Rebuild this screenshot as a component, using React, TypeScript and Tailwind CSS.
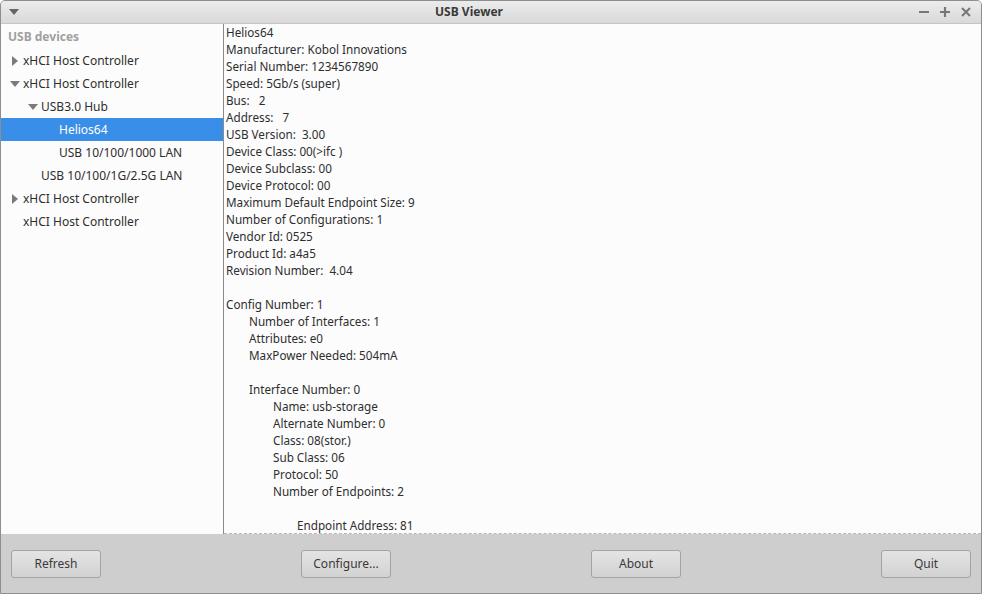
import React from 'react';

type Node = { label: string; level: number; arrow?: 'right' | 'down'; selected?: boolean };

const tree: Node[] = [
  { label: 'xHCI Host Controller', level: 0, arrow: 'right' },
  { label: 'xHCI Host Controller', level: 0, arrow: 'down' },
  { label: 'USB3.0 Hub', level: 1, arrow: 'down' },
  { label: 'Helios64', level: 2, selected: true },
  { label: 'USB 10/100/1000 LAN', level: 2 },
  { label: 'USB 10/100/1G/2.5G LAN', level: 1 },
  { label: 'xHCI Host Controller', level: 0, arrow: 'right' },
  { label: 'xHCI Host Controller', level: 0 },
];

// [indent level, text]
const details: [number, string][] = [
  [0, 'Helios64'],
  [0, 'Manufacturer: Kobol Innovations'],
  [0, 'Serial Number: 1234567890'],
  [0, 'Speed: 5Gb/s (super)'],
  [0, 'Bus:   2'],
  [0, 'Address:   7'],
  [0, 'USB Version:  3.00'],
  [0, 'Device Class: 00(>ifc )'],
  [0, 'Device Subclass: 00'],
  [0, 'Device Protocol: 00'],
  [0, 'Maximum Default Endpoint Size: 9'],
  [0, 'Number of Configurations: 1'],
  [0, 'Vendor Id: 0525'],
  [0, 'Product Id: a4a5'],
  [0, 'Revision Number:  4.04'],
  [0, ''],
  [0, 'Config Number: 1'],
  [1, 'Number of Interfaces: 1'],
  [1, 'Attributes: e0'],
  [1, 'MaxPower Needed: 504mA'],
  [1, ''],
  [1, 'Interface Number: 0'],
  [2, 'Name: usb-storage'],
  [2, 'Alternate Number: 0'],
  [2, 'Class: 08(stor.)'],
  [2, 'Sub Class: 06'],
  [2, 'Protocol: 50'],
  [2, 'Number of Endpoints: 2'],
  [2, ''],
  [3, 'Endpoint Address: 81'],
];

const indentCls = ['pl-[2px]', 'pl-[25px]', 'pl-[49px]', 'pl-[73px]'];
const treeIndent = ['pl-[5px]', 'pl-[23px]', 'pl-[41px]'];

function Arrow({ dir }: { dir?: 'right' | 'down' }) {
  if (!dir) return <span className="w-[17px] shrink-0" />;
  return (
    <span className="w-[17px] shrink-0 flex items-center justify-center">
      {dir === 'right' ? (
        <svg width="6" height="10" viewBox="0 0 6 10"><path d="M0 0 L6 5 L0 10 Z" fill="#7b7b7b" /></svg>
      ) : (
        <svg width="10" height="6" viewBox="0 0 10 6"><path d="M0 0 L10 0 L5 6 Z" fill="#7b7b7b" /></svg>
      )}
    </span>
  );
}

function Btn({ label }: { label: string }) {
  return (
    <button className="w-[90px] h-[28px] rounded-[3px] border border-[#a3a3a3] bg-gradient-to-b from-[#e4e4e4] to-[#d2d2d2] text-[12px] text-[#3a3a3a]">
      {label}
    </button>
  );
}

export default function App() {
  return (
    <div className="w-[982px] h-[594px] flex flex-col bg-[#cecece] border border-[#8e8e8e] rounded-t-[5px] overflow-hidden font-['Noto_Sans','Open_Sans',sans-serif] text-[#2e2e2e]">
      {/* title bar */}
      <div className="h-[23px] shrink-0 flex items-center pl-[8px] pr-[10px] bg-gradient-to-b from-[#ececec] to-[#d9d9d9] border-b border-[#c4c4c4]">
        <svg width="10" height="6" viewBox="0 0 10 6"><path d="M0 0 L10 0 L5 6 Z" fill="#666" /></svg>
        <div className="flex-1 text-center text-[12px] font-bold text-[#3a3a3a]">USB Viewer</div>
        <div className="flex items-center gap-[11px]">
          <svg width="10" height="10" viewBox="0 0 10 10"><path d="M0 5 H10" stroke="#777" strokeWidth="2.2" /></svg>
          <svg width="10" height="10" viewBox="0 0 10 10"><path d="M0 5 H10 M5 0 V10" stroke="#777" strokeWidth="2.2" /></svg>
          <svg width="10" height="10" viewBox="0 0 10 10"><path d="M1 1 L9 9 M9 1 L1 9" stroke="#777" strokeWidth="2" /></svg>
        </div>
      </div>

      {/* panes */}
      <div className="flex h-[510px] shrink-0 bg-[#fcfcfc]">
        <div className="w-[223px] shrink-0 border-r border-[#8a8a8a]">
          <div className="h-[25px] flex items-center pl-[7px] text-[12px] font-bold text-[#a0a0a0]">USB devices</div>
          {tree.map((n, i) => (
            <div
              key={i}
              className={`h-[23px] flex items-center text-[12px] ${treeIndent[n.level]} ${n.selected ? 'bg-[#398ee7] text-white' : ''}`}
            >
              <Arrow dir={n.arrow} />
              <span>{n.label}</span>
            </div>
          ))}
        </div>
        <div className="flex-1 text-[11.7px] leading-[17px] whitespace-pre border-b border-dashed border-[#b8b8b8] overflow-hidden">
          {details.map(([lvl, t], i) => (
            <div key={i} className={`h-[17px] ${indentCls[lvl]}`}>{t}</div>
          ))}
        </div>
      </div>

      {/* button bar */}
      <div className="flex-1 flex items-center justify-between px-[10px]">
        <Btn label="Refresh" />
        <Btn label="Configure..." />
        <Btn label="About" />
        <Btn label="Quit" />
      </div>
    </div>
  );
}
